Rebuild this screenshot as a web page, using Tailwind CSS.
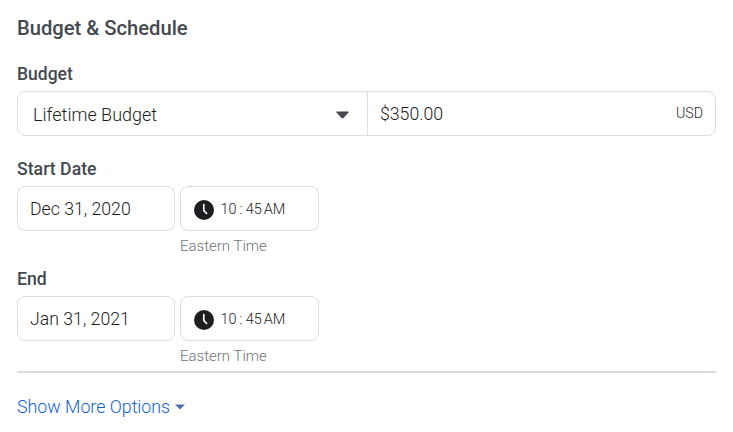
<!DOCTYPE html>
<html lang="en">
<head>
    <meta charset="UTF-8">
    <title>Budget &amp; Schedule</title>
    <script src="https://cdn.jsdelivr.net/npm/@tailwindcss/browser@4"></script>
</head>
<body class="bg-white font-['Roboto',sans-serif]">
    <main class="w-[733px] h-[432px] overflow-hidden pl-[17px] pr-[17px] pt-[17px]">
        <h2 class="text-[20.200px] leading-[22px] font-medium text-[#444950]">Budget &amp; Schedule</h2>

        <label class="block mt-[25px] text-[17.500px] leading-[20px] font-medium text-[#444950]">Budget</label>
        <div class="mt-[7px] flex h-[45px] border border-[#dadde1] rounded-[8px]">
            <div class="w-[350px] flex items-center justify-between pl-[15px] pr-[18px] border-r border-[#dadde1]">
                <span class="pt-[2px] text-[18px] font-light text-[#1c1e21]">Lifetime Budget</span>
                <svg class="mt-[2px]" width="13" height="8" viewBox="0 0 13 8"><path d="M1 .5h11c.6 0 .8.6.5 1L7.500 7c-.5.5-1.500.5-2 0L.5 1.500c-.3-.4-.1-1 .5-1z" fill="#444950"/></svg>
            </div>
            <div class="flex-1 flex items-center justify-between pl-[12px] pr-[12px]">
                <span class="pt-[2px] text-[17.700px] font-light text-[#1c1e21]">$350.00</span>
                <span class="text-[14.200px] font-light text-[#1c1e21]">USD</span>
            </div>
        </div>

        <label class="block mt-[23px] text-[17.700px] leading-[20px] font-medium text-[#444950]">Start Date</label>
        <div class="mt-[7px] flex gap-[5px]">
            <div class="w-[158px] h-[45px] flex items-center pl-[12px] pt-[2px] border border-[#dadde1] rounded-[8px] text-[17.700px] font-light text-[#1c1e21]">Dec 31, 2020</div>
            <div>
                <div class="w-[139px] h-[45px] flex items-center pl-[13px] pt-[2px] gap-[6.500px] border border-[#dadde1] rounded-[8px] text-[14.500px] font-light text-[#1c1e21]">
                    <svg width="20" height="20" viewBox="0 0 20 20"><circle cx="10" cy="10" r="10" fill="#1c1e21"/><path d="M9.800 4.500v6l2.800 3" fill="none" stroke="#fff" stroke-width="1.700" stroke-linecap="round" stroke-linejoin="round"/></svg>
                    <span class="flex"><span>10</span><span class="mx-[3px]">:</span><span>45</span><span class="ml-[2px]">AM</span></span>
                </div>
                <div class="mt-[7px] text-[15px] leading-[16px] font-light text-[#6f7277]">Eastern Time</div>
            </div>
        </div>

        <label class="block mt-[15px] text-[17.700px] leading-[20px] font-medium text-[#444950]">End</label>
        <div class="mt-[7px] flex gap-[5px]">
            <div class="w-[158px] h-[45px] flex items-center pl-[12px] pt-[2px] border border-[#dadde1] rounded-[8px] text-[17.700px] font-light text-[#1c1e21]">Jan 31, 2021</div>
            <div>
                <div class="w-[139px] h-[45px] flex items-center pl-[13px] pt-[2px] gap-[6.500px] border border-[#dadde1] rounded-[8px] text-[14.500px] font-light text-[#1c1e21]">
                    <svg width="20" height="20" viewBox="0 0 20 20"><circle cx="10" cy="10" r="10" fill="#1c1e21"/><path d="M9.800 4.500v6l2.800 3" fill="none" stroke="#fff" stroke-width="1.700" stroke-linecap="round" stroke-linejoin="round"/></svg>
                    <span class="flex"><span>10</span><span class="mx-[3px]">:</span><span>45</span><span class="ml-[2px]">AM</span></span>
                </div>
                <div class="mt-[7px] text-[15px] leading-[16px] font-light text-[#6f7277]">Eastern Time</div>
            </div>
        </div>

        <div class="mt-[7px] border-t-2 border-[#dadde1]"></div>

        <a class="mt-[23px] flex items-center gap-[5px] text-[17.800px] leading-[22px] font-light text-[#0f5fd6]">
            Show More Options
            <svg width="10" height="6" viewBox="0 0 10 6"><path d="M0 .5h10L5 5.500z" fill="#4a6fb5"/></svg>
        </a>
    </main>
</body>
</html>
